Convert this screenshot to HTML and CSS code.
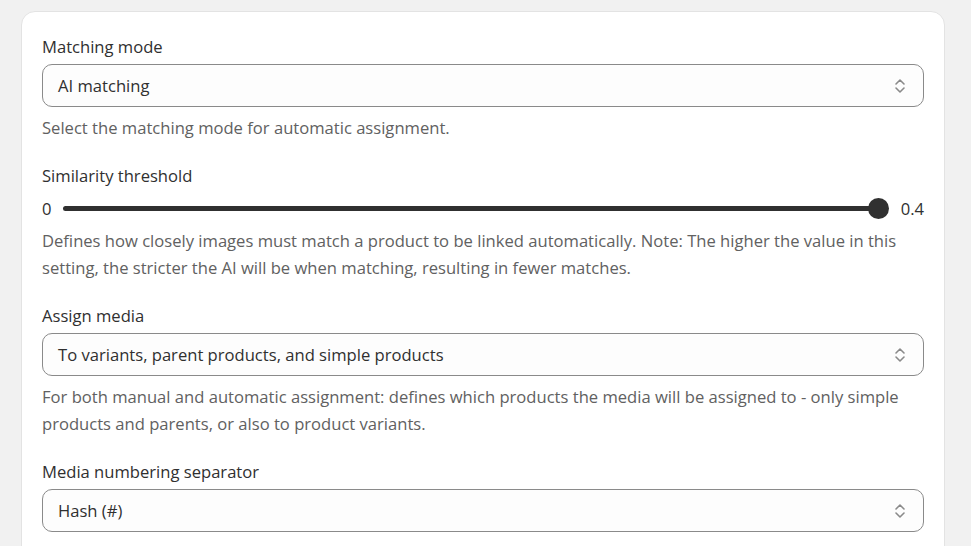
FILE: index.html
```html
<!DOCTYPE html>
<html lang="en">
<head>
<meta charset="utf-8">
<title>Settings</title>
<link rel="stylesheet" href="styles.css">
</head>
<body>
<div class="card">
  <div class="field">
    <div class="label">Matching mode</div>
    <div class="select">
      <span class="value">AI matching</span>
      <svg class="chev" width="12" height="18" viewBox="0 0 12 18"><path d="M2 7 L6 3 L10 7 M2 11 L6 15 L10 11" fill="none" stroke="#8a8a8a" stroke-width="1.6" stroke-linecap="round" stroke-linejoin="round"/></svg>
    </div>
    <div class="help">Select the matching mode for automatic assignment.</div>
  </div>
  <div class="field">
    <div class="label">Similarity threshold</div>
    <div class="slider-row">
      <span class="min">0</span>
      <div class="track"><div class="thumb"></div></div>
      <span class="max">0.4</span>
    </div>
    <div class="help">Defines how closely images must match a product to be linked automatically. Note: The higher the value in this setting, the stricter the AI will be when matching, resulting in fewer matches.</div>
  </div>
  <div class="field">
    <div class="label">Assign media</div>
    <div class="select">
      <span class="value">To variants, parent products, and simple products</span>
      <svg class="chev" width="12" height="18" viewBox="0 0 12 18"><path d="M2 7 L6 3 L10 7 M2 11 L6 15 L10 11" fill="none" stroke="#8a8a8a" stroke-width="1.6" stroke-linecap="round" stroke-linejoin="round"/></svg>
    </div>
    <div class="help">For both manual and automatic assignment: defines which products the media will be assigned to - only simple products and parents, or also to product variants.</div>
  </div>
  <div class="field">
    <div class="label">Media numbering separator</div>
    <div class="select">
      <span class="value">Hash (#)</span>
      <svg class="chev" width="12" height="18" viewBox="0 0 12 18"><path d="M2 7 L6 3 L10 7 M2 11 L6 15 L10 11" fill="none" stroke="#8a8a8a" stroke-width="1.6" stroke-linecap="round" stroke-linejoin="round"/></svg>
    </div>
  </div>
</div>
</body>
</html>
```

FILE: styles.css
```css
html, body {
  margin: 0;
  padding: 0;
  background: #f1f1f1;
  height: 100%;
  overflow: hidden;
}
body {
  padding: 11px 26px 0 21px;
  font-family: "Open Sans", "Noto Sans", sans-serif;
  font-size: 16.6px;
  color: #303030;
}
.card {
  background: #ffffff;
  border: 1px solid #e3e3e3;
  border-radius: 14px;
  padding: 23px 20px 40px 20px;
  display: flex;
  flex-direction: column;
  gap: 23px;
}
.field {
  display: flex;
  flex-direction: column;
}
.label {
  line-height: 24px;
  color: #303030;
  margin-bottom: 5px;
}
.select {
  height: 41px;
  border: 1px solid #8a8a8a;
  border-radius: 10px;
  display: flex;
  align-items: center;
  justify-content: space-between;
  padding: 0 17px 0 15px;
  background: #fdfdfd;
}
.value {
  color: #303030;
  line-height: 24px;
}
.chev {
  display: block;
}
.help {
  margin-top: 7px;
  line-height: 27px;
  color: #616161;
}
.slider-row {
  margin-top: 3px;
  height: 24px;
  display: flex;
  align-items: center;
  gap: 11px;
}
.min, .max {
  color: #303030;
}
.max {
  margin-left: 11px;
}
.track {
  flex: 1;
  height: 5px;
  border-radius: 3px;
  background: #303030;
  position: relative;
}
.thumb {
  position: absolute;
  right: -10.5px;
  top: 50%;
  width: 21px;
  height: 21px;
  margin-top: -10.5px;
  border-radius: 50%;
  background: #303030;
}
```
